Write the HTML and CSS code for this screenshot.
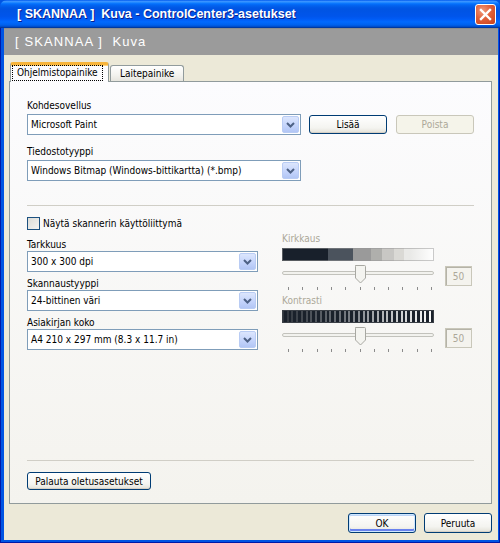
FILE: index.html
```html
<!DOCTYPE html>
<html lang="fi">
<head>
<meta charset="utf-8">
<title>[ SKANNAA ] Kuva - ControlCenter3-asetukset</title>
<link rel="stylesheet" href="styles.css">
</head>
<body>
<div class="window">
  <div class="titlebar">
    <span class="title">[ SKANNAA ]&nbsp; Kuva - ControlCenter3-asetukset</span>
    <span class="close"><svg width="13" height="13" viewBox="0 0 13 13"><path d="M2 2 L11 11 M11 2 L2 11" stroke="#fff" stroke-width="2.4" stroke-linecap="square"/></svg></span>
  </div>
  <div class="frame">
    <div class="client">
      <div class="header">[ SKANNAA ]&nbsp; Kuva</div>
      <div class="tabs">
        <div class="tab active"><span class="focus">Ohjelmistopainike</span></div>
        <div class="tab">Laitepainike</div>
      </div>
      <div class="panel">
        <div class="lbl lbl-first">Kohdesovellus</div>
        <div class="row row-app">
          <div class="select sel-wide"><span class="val">Microsoft Paint</span><span class="arrow"><svg width="9" height="6" viewBox="0 0 9 6"><path d="M1 1 L4.5 4.5 L8 1" fill="none" stroke="#4D6185" stroke-width="2"/></svg></span></div>
          <span class="btn btn-add">Lisää</span>
          <span class="btn btn-del disabled">Poista</span>
        </div>
        <div class="lbl lbl-type">Tiedostotyyppi</div>
        <div class="select sel-wide sel-type"><span class="val">Windows Bitmap (Windows-bittikartta) (*.bmp)</span><span class="arrow"><svg width="9" height="6" viewBox="0 0 9 6"><path d="M1 1 L4.5 4.5 L8 1" fill="none" stroke="#4D6185" stroke-width="2"/></svg></span></div>
        <div class="sep sep-top"></div>
        <div class="check-row"><span class="checkbox"></span><span>Näytä skannerin käyttöliittymä</span></div>
        <div class="cols">
          <div class="col-left">
            <div class="lbl lbl-l1">Tarkkuus</div>
            <div class="select"><span class="val">300 x 300 dpi</span><span class="arrow"><svg width="9" height="6" viewBox="0 0 9 6"><path d="M1 1 L4.5 4.5 L8 1" fill="none" stroke="#4D6185" stroke-width="2"/></svg></span></div>
            <div class="lbl lbl-l">Skannaustyyppi</div>
            <div class="select"><span class="val">24-bittinen väri</span><span class="arrow"><svg width="9" height="6" viewBox="0 0 9 6"><path d="M1 1 L4.5 4.5 L8 1" fill="none" stroke="#4D6185" stroke-width="2"/></svg></span></div>
            <div class="lbl lbl-l">Asiakirjan koko</div>
            <div class="select"><span class="val">A4 210 x 297 mm (8.3 x 11.7 in)</span><span class="arrow"><svg width="9" height="6" viewBox="0 0 9 6"><path d="M1 1 L4.5 4.5 L8 1" fill="none" stroke="#4D6185" stroke-width="2"/></svg></span></div>
          </div>
          <div class="col-right">
            <div class="lbl dis lbl-r1">Kirkkaus</div>
            <div class="bar bar-bright"></div>
            <div class="slider-row">
              <svg class="slider" width="152" height="27" viewBox="0 0 152 27">
                <rect x="0.5" y="7.5" width="151" height="3" rx="1.5" fill="#F2F2EE" stroke="#C2C2BC"/>
                <g fill="#8C8C8C">
                  <rect x="6" y="23" width="1" height="3"/><rect x="20" y="23" width="1" height="3"/><rect x="35" y="23" width="1" height="3"/><rect x="49" y="23" width="1" height="3"/><rect x="63" y="23" width="1" height="3"/><rect x="78" y="23" width="1" height="3"/><rect x="92" y="23" width="1" height="3"/><rect x="106" y="23" width="1" height="3"/><rect x="120" y="23" width="1" height="3"/><rect x="135" y="23" width="1" height="3"/><rect x="149" y="23" width="1" height="3"/>
                </g>
                <path d="M73.5 1.5 H82.5 a1 1 0 0 1 1 1 V14 L78.5 19 L73.5 14 V2.5 a1 1 0 0 1 1 -1 Z" fill="#F4F4F0" stroke="#A8A8A2"/>
              </svg>
              <span class="edit">50</span>
            </div>
            <div class="lbl dis lbl-r2">Kontrasti</div>
            <div class="bar bar-contrast"></div>
            <div class="slider-row slider-row2">
              <svg class="slider" width="152" height="27" viewBox="0 0 152 27">
                <rect x="0.5" y="7.5" width="151" height="3" rx="1.5" fill="#F2F2EE" stroke="#C2C2BC"/>
                <g fill="#8C8C8C">
                  <rect x="6" y="23" width="1" height="3"/><rect x="20" y="23" width="1" height="3"/><rect x="35" y="23" width="1" height="3"/><rect x="49" y="23" width="1" height="3"/><rect x="63" y="23" width="1" height="3"/><rect x="78" y="23" width="1" height="3"/><rect x="92" y="23" width="1" height="3"/><rect x="106" y="23" width="1" height="3"/><rect x="120" y="23" width="1" height="3"/><rect x="135" y="23" width="1" height="3"/><rect x="149" y="23" width="1" height="3"/>
                </g>
                <path d="M73.5 1.5 H82.5 a1 1 0 0 1 1 1 V14 L78.5 19 L73.5 14 V2.5 a1 1 0 0 1 1 -1 Z" fill="#F4F4F0" stroke="#A8A8A2"/>
              </svg>
              <span class="edit">50</span>
            </div>
          </div>
        </div>
        <div class="bottom">
          <div class="sep"></div>
          <span class="btn btn-reset">Palauta oletusasetukset</span>
        </div>
      </div>
      <div class="actions">
        <span class="btn btn-ok">OK</span>
        <span class="btn btn-cancel">Peruuta</span>
      </div>
    </div>
  </div>
</div>
</body>
</html>
```

FILE: styles.css
```css
* { box-sizing: border-box; }
html, body { margin: 0; padding: 0; }
body {
  width: 500px;
  height: 543px;
  overflow: hidden;
  background: #ECE9D8;
  font-family: "DejaVu Sans Condensed", "DejaVu Sans", "Liberation Sans", sans-serif;
  font-stretch: condensed;
  font-size: 10px;
  color: #000;
}
.window {
  width: 500px;
  height: 543px;
  display: flex;
  flex-direction: column;
  background: #0054E3;
}
.titlebar {
  height: 28px;
  flex: none;
  display: flex;
  align-items: center;
  padding: 0 4px 0 17px;
  border-radius: 7px 7px 0 0;
  background: linear-gradient(180deg, #0058EE 0%, #3A93FF 5%, #288EFF 8%, #127DFF 11%, #036FFC 14%, #0262EE 20%, #0057E5 28%, #0054E3 34%, #0055EB 58%, #005BF5 68%, #026AFE 78%, #0062EF 88%, #0052D6 94%, #0040AB 97%, #003092 100%);
}
.title {
  flex: 1;
  color: #fff;
  font-family: "Liberation Sans", Arial, sans-serif;
  font-stretch: normal;
  font-weight: bold;
  font-size: 12.5px;
  text-shadow: 1px 1px 0 #0A1E8C;
  white-space: nowrap;
}
.close {
  width: 21px;
  height: 21px;
  display: flex;
  align-items: center;
  justify-content: center;
  border: 1px solid #fff;
  border-radius: 3px;
  background: radial-gradient(circle at 35% 30%, #F09A7C 0%, #E0603A 45%, #C8401A 100%);
}
.frame {
  flex: 1;
  display: flex;
  padding: 0 4px 3px 4px;
  background: #0054E3;
  box-shadow: inset 1px 0 0 #0019A8, inset -1px 0 0 #0019A8, inset 0 -1px 0 #0019A8;
}
.client {
  flex: 1;
  display: flex;
  flex-direction: column;
  background: #ECE9D8;
}
.header {
  height: 27px;
  flex: none;
  background: #9B9B9B;
  border-top: 1px solid #8E8E8E;
  color: #fff;
  font-family: "Liberation Sans", Arial, sans-serif;
  font-stretch: normal;
  font-size: 13px;
  letter-spacing: 1.1px;
  line-height: 26px;
  padding-left: 11px;
}
.tabs {
  height: 19px;
  margin-top: 7px;
  margin-left: 6px;
  display: flex;
  align-items: flex-end;
  position: relative;
  z-index: 1;
}
.tab {
  height: 16px;
  width: 74px;
  margin-left: 1px;
  border: 1px solid #919B9C;
  border-bottom: none;
  border-radius: 3px 3px 0 0;
  background: linear-gradient(#FFFFFF, #F3F3EF 60%, #E6E5DE);
  padding-left: 9px;
  line-height: 15px;
  white-space: nowrap;
}
.tab.active {
  width: 99px;
  height: 20px;
  margin-left: 0;
  margin-bottom: -1px;
  border-top: 3px solid #F7B43B;
  box-shadow: inset 0 1px 0 #FFD37A;
  background: #FCFCFE;
  padding: 0 0 0 1px;
  line-height: 14px;
}
.focus {
  display: inline-block;
  border: 1px dotted #000;
  padding: 0 4px 1px 4px;
  height: 16px;
  line-height: 14px;
}
.panel {
  height: 423px;
  margin: 0 6px 0 5px;
  border: 1px solid #919B9C;
  background: linear-gradient(#FCFCFE, #F4F3EE);
  padding: 0 17px 12px 17px;
  display: flex;
  flex-direction: column;
}
.lbl {
  line-height: 12px;
  height: 12px;
  white-space: nowrap;
}
.lbl.dis { color: #ACA899; }
.lbl-first { margin-top: 18px; }
.lbl-type { margin-top: 11px; }
.lbl-l1 { margin-top: 9px; }
.lbl-l { margin-top: 6px; }
.lbl-r1 { margin-top: 3px; }
.lbl-r2 { margin-top: 4px; }
.row {
  display: flex;
  align-items: center;
}
.row-app { margin-top: 2px; }
.sel-type { margin-top: 2px; }
.select {
  height: 21px;
  border: 1px solid #7F9DB9;
  background: #fff;
  display: flex;
  align-items: center;
  padding: 1px;
}
.sel-wide { width: 274px; }
.select .val {
  flex: 1;
  padding-left: 2px;
  white-space: nowrap;
  overflow: hidden;
}
.arrow {
  width: 17px;
  height: 17px;
  border: 1px solid #B9CCF4;
  border-radius: 2px;
  background: linear-gradient(#DCE6FD, #C3D3FB 60%, #B2C6F5);
  display: flex;
  align-items: center;
  justify-content: center;
}
.btn {
  display: flex;
  align-items: center;
  justify-content: center;
  height: 19px;
  border: 1px solid #003C74;
  border-radius: 3px;
  background: linear-gradient(#FFFFFF, #F4F4F0 70%, #E3E1D8);
  box-shadow: inset 0 -1px 0 #D6D0C5;
  white-space: nowrap;
}
.btn-add { width: 78px; margin-left: 8px; }
.btn-del { width: 78px; margin-left: 9px; }
.btn.disabled {
  border-color: #C9C7BA;
  background: #F5F4EA;
  box-shadow: none;
  color: #ACA899;
}
.sep {
  height: 1px;
  background: #D0CEC6;
}
.sep-top { margin-top: 24px; }
.check-row {
  margin-top: 11px;
  height: 13px;
  display: flex;
  align-items: center;
  line-height: 13px;
}
.checkbox {
  width: 13px;
  height: 13px;
  border: 1px solid #1C5180;
  background: linear-gradient(135deg, #DCDCD7, #F4F4F2);
  margin-right: 3px;
  flex: none;
}
.cols {
  display: grid;
  grid-template-columns: 231px 190px;
  column-gap: 24px;
}
.col-left, .col-right {
  display: flex;
  flex-direction: column;
}
.bar {
  height: 13px;
  width: 152px;
  margin-top: 3px;
}
.bar-bright {
  background: linear-gradient(90deg, #18202B 0 46px, #4B535D 46px 71px, #9A9A9A 71px 89px, #AFAFAC 89px 100px, #C8C7C4 100px 112px, #DAD9D5 112px 122px, #E9E9E7 122px 128px, #FFFFFF 152px);
  box-shadow: inset 0 0 0 1px rgba(150,150,150,0.5);
}
.bar-contrast {
  background:
    repeating-linear-gradient(90deg, transparent 0 2px, #1A212B 2px 4.75px),
    linear-gradient(90deg, #2E343C, #6E737A 40%, #C8CACC 75%, #FFFFFF);
  box-shadow: inset 0 0 0 1px #3A3F46;
}
.slider-row {
  margin-top: 3px;
  height: 27px;
  display: flex;
  align-items: flex-start;
}
.slider-row2 { margin-top: 3px; }
.slider { display: block; flex: none; }
.edit {
  width: 27px;
  height: 20px;
  margin-left: 11px;
  margin-top: 2px;
  border: 1px solid #C9C7BA;
  box-shadow: inset 1px 1px 0 #B5B3A8;
  background: #F4F3EE;
  color: #ACA899;
  display: flex;
  align-items: center;
  justify-content: center;
}
.bottom {
  margin-top: auto;
  display: flex;
  flex-direction: column;
  align-items: flex-start;
}
.bottom .sep { width: 100%; }
.btn-reset {
  margin-top: 11px;
  height: 18px;
  width: 124px;
  margin-bottom: 1px;
}
.actions {
  margin-top: 9px;
  display: flex;
  justify-content: flex-end;
  gap: 8px;
  padding-right: 6px;
}
.btn-ok, .btn-cancel {
  width: 68px;
  height: 20px;
}
.btn-ok {
  box-shadow: inset 0 0 0 1px #CEE7FF, inset 0 -2px 0 1px #6982EE, inset 0 2px 0 #BCD4F6;
}
```
